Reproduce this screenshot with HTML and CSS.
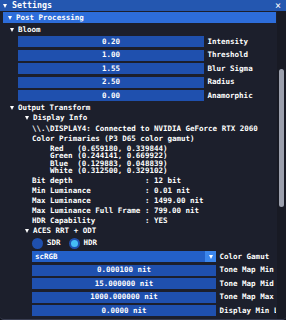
FILE: index.html
```html
<!DOCTYPE html>
<html lang="en">
<head>
  <meta charset="UTF-8">
  <title>Settings</title>
  <link rel="stylesheet" href="styles.css">
</head>
<body>
  <div class="window">
    <div class="titlebar">
      <span class="arrow"></span>
      <span class="title">Settings</span>
      <span class="close">&times;</span>
    </div>
    <div class="body">
      <div class="content">
        <div class="header"><span class="arrow"></span>Post Processing</div>

        <!-- Bloom -->
        <div class="node"><span class="arrow"></span>Bloom</div>
        <div class="indent">
          <div class="row"><div class="slider">0.20</div><span class="label">Intensity</span></div>
          <div class="row"><div class="slider">1.00</div><span class="label">Threshold</span></div>
          <div class="row"><div class="slider">1.55</div><span class="label">Blur Sigma</span></div>
          <div class="row"><div class="slider">2.50</div><span class="label">Radius</span></div>
          <div class="row"><div class="slider">0.00</div><span class="label">Anamorphic</span></div>
        </div>

        <!-- Output Transform -->
        <div class="node"><span class="arrow"></span>Output Transform</div>
        <div class="indent">
          <div class="node"><span class="arrow"></span>Display Info</div>
          <div class="indent">
            <div class="text">\\.\DISPLAY4: Connected to NVIDIA GeForce RTX 2060</div>
            <div class="text">Color Primaries (P3 D65 color gamut)</div>
            <pre class="text">    Red   (0.659180, 0.339844)
    Green (0.244141, 0.669922)
    Blue  (0.129883, 0.048839)
    White (0.312500, 0.329102)</pre>
            <pre class="text">Bit depth                : 12 bit</pre>
            <pre class="text">Min Luminance            : 0.01 nit</pre>
            <pre class="text">Max Luminance            : 1499.00 nit</pre>
            <pre class="text">Max Luminance Full Frame : 799.00 nit</pre>
            <pre class="text">HDR Capability           : YES</pre>
          </div>

          <div class="node"><span class="arrow"></span>ACES RRT + ODT</div>
          <div class="indent">
            <div class="radios">
              <span class="radio"></span><span>SDR</span>
              <span class="radio checked"></span><span>HDR</span>
            </div>
            <div class="row wide">
              <div class="combo"><span>scRGB</span><span class="combo-btn"><span class="arrow"></span></span></div>
              <span class="label">Color Gamut</span>
            </div>
            <div class="row wide"><div class="slider">0.000100 nit</div><span class="label">Tone Map Min</span></div>
            <div class="row wide"><div class="slider">15.000000 nit</div><span class="label">Tone Map Mid</span></div>
            <div class="row wide"><div class="slider">1000.000000 nit</div><span class="label">Tone Map Max</span></div>
            <div class="row wide"><div class="slider">0.0000 nit</div><span class="label">Display Min Luminance</span></div>
          </div>
        </div>
      </div>
      <div class="scrollbar"><div class="thumb"></div></div>
    </div>
  </div>
</body>
</html>
```
FILE: styles.css
```css
/* General styling */
body {
  margin: 0;
  background: #10121a;
  font-family: "DejaVu Sans Mono", "Liberation Mono", monospace;
  font-weight: bold;
  font-size: 7.5px;
  line-height: 7.5px;
  color: #fff;
}
.window {
  width: 286px;
  height: 319px;
  background: #1c1f2c;
  border-bottom: 1px solid #3a3e52;
  border-radius: 0 0 4px 4px;
  overflow: hidden;
  display: flex;
  flex-direction: column;
}
.arrow {
  display: inline-block;
  width: 0;
  height: 0;
  border-left: 2.5px solid transparent;
  border-right: 2.5px solid transparent;
  border-top: 4px solid #fff;
  margin-right: 4px;
  vertical-align: middle;
}
.titlebar {
  height: 11px;
  background: #2457b0;
  display: flex;
  align-items: center;
  padding-left: 3px;
  flex-shrink: 0;
}
.titlebar .title {
  flex: 1;
  padding-left: 1px;
  font-size: 8.3px;
}
.close {
  font-size: 10px;
  width: 10px;
  margin-right: 3px;
  text-align: center;
  font-weight: normal;
}
.body {
  flex: 1;
  display: flex;
  min-height: 0;
}
.content {
  flex: 1;
  min-width: 0;
  padding: 1px 1px 0 3px;
  display: flex;
  flex-direction: column;
  gap: 2.5px;
  overflow: hidden;
}
.header {
  height: 11px;
  background: #2d6dda;
  display: flex;
  align-items: center;
  padding-left: 5px;
  flex-shrink: 0;
}
.node {
  height: 8px;
  display: flex;
  align-items: center;
  padding-left: 7px;
  flex-shrink: 0;
}
.indent {
  padding-left: 15px;
  display: flex;
  flex-direction: column;
  gap: 2.5px;
  min-width: 0;
}
.indent .indent {
  padding-left: 14px;
}
.row {
  display: flex;
  align-items: center;
  height: 11px;
  flex-shrink: 0;
  min-width: 0;
  overflow: hidden;
}
.slider, .combo {
  width: 186px;
  height: 11px;
  flex-shrink: 0;
  background: #1f50ae;
  display: flex;
  align-items: center;
  justify-content: center;
  white-space: pre;
  overflow: hidden;
}
.wide .slider, .wide .combo {
  width: 184px;
}
.combo {
  justify-content: space-between;
  padding-left: 3px;
  box-sizing: border-box;
  background: #2360c8;
}
.combo-btn {
  width: 11px;
  height: 11px;
  background: #3b86ec;
  display: flex;
  align-items: center;
  justify-content: center;
}
.combo-btn .arrow {
  margin: 0;
}
.label {
  margin-left: 3.5px;
  white-space: nowrap;
}
.text {
  margin: 0;
  font: inherit;
  white-space: pre;
  flex-shrink: 0;
}
.radios {
  height: 11px;
  display: flex;
  align-items: center;
  flex-shrink: 0;
}
.radio {
  width: 11px;
  height: 11px;
  border-radius: 50%;
  background: #1f50ae;
  margin-right: 4px;
  box-sizing: border-box;
}
.radio.checked {
  border: 2.5px solid #1f50ae;
  background: #45bdf5;
}
.radios span + .radio {
  margin-left: 8px;
}
.scrollbar {
  width: 9px;
  background: #181a24;
  padding: 58px 2px 0 2px;
  box-sizing: border-box;
  flex-shrink: 0;
}
.thumb {
  height: 138px;
  background: #9ca0ad;
  border-radius: 3px;
}
```
